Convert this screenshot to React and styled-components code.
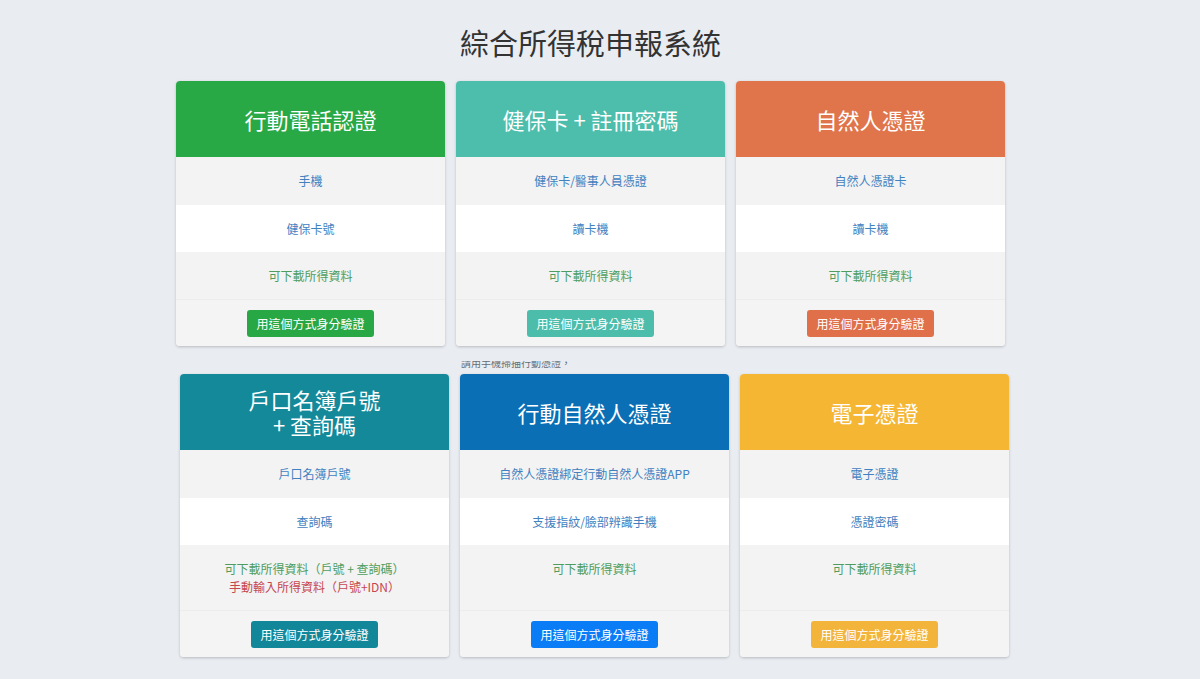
import React from "react";
import styled, { createGlobalStyle } from "styled-components";

const GlobalStyle = createGlobalStyle`
  html, body {
    margin: 0;
    padding: 0;
    background: #e9edf2;
    font-family: "Noto Sans CJK TC", "Liberation Sans", sans-serif;
  }
`;

const Page = styled.div`
  width: 829px;
  margin-left: 176px;
  padding-top: 22px;
  padding-bottom: 22px;
`;

const Title = styled.h1`
  margin: 0 0 19px;
  font-size: 29px;
  line-height: 40px;
  font-weight: 400;
  color: #333;
  text-align: center;
`;

const Row = styled.div`
  display: grid;
  grid-template-columns: repeat(3, 269px);
  column-gap: 11px;
  margin-left: ${(p) => p.$shift || 0}px;
  margin-bottom: 28px;
`;

const Card = styled.div`
  position: relative;
  display: flex;
  flex-direction: column;
  background: #fff;
  border-radius: 4px;
  box-shadow: 0 1px 3px rgba(0, 0, 0, 0.22);
`;

const Header = styled.div`
  display: flex;
  align-items: center;
  justify-content: center;
  min-height: 76px;
  padding: 0 12px;
  box-sizing: border-box;
  background: ${(p) => p.$bg};
  color: #fff;
  font-size: 22px;
  line-height: 25px;
  text-align: center;
  border-radius: 4px 4px 0 0;
`;

const Item = styled.div`
  padding: ${(p) => (p.$first ? "15px" : "15px 8px 14px")};
  padding-left: 8px;
  padding-right: 8px;
  font-size: 12px;
  line-height: 18px;
  text-align: center;
  color: #4281c0;
  background: ${(p) => (p.$light ? "#ffffff" : "#f3f3f3")};
  flex: ${(p) => (p.$grow ? 1 : "none")};
`;

const Note = styled.div`
  color: ${(p) => (p.$warn ? "#c6464f" : "#4d9d60")};
`;

const Footer = styled.div`
  display: flex;
  justify-content: center;
  padding: 10px 0 9px;
  background: #f4f4f4;
  border-top: 1px solid #ececec;
  border-radius: 0 0 4px 4px;
`;

const Button = styled.button`
  height: 27px;
  padding: 0 9px;
  border: none;
  border-radius: 3px;
  background: ${(p) => p.$bg};
  color: #fff;
  font-family: inherit;
  font-size: 12px;
  line-height: 27px;
  cursor: pointer;
`;

const Caption = styled.div`
  position: absolute;
  left: 1px;
  top: -13px;
  height: 9px;
  overflow: hidden;
  display: flex;
  align-items: flex-end;
  font-size: 10px;
  line-height: 14px;
  color: #666c74;
  white-space: nowrap;
`;

const cardsTop = [
  {
    title: "行動電話認證",
    head: "#29a846",
    btn: "#28a745",
    items: ["手機", "健保卡號"],
  },
  {
    title: "健保卡 + 註冊密碼",
    head: "#4dbdac",
    btn: "#4cbcab",
    items: ["健保卡/醫事人員憑證", "讀卡機"],
  },
  {
    title: "自然人憑證",
    head: "#e0744a",
    btn: "#e0704a",
    items: ["自然人憑證卡", "讀卡機"],
  },
];

const cardsBottom = [
  {
    title: ["戶口名簿戶號", "+ 查詢碼"],
    head: "#13899a",
    btn: "#13879a",
    items: ["戶口名簿戶號", "查詢碼"],
    notes: [
      { text: "可下載所得資料（戶號 + 查詢碼）" },
      { text: "手動輸入所得資料（戶號+IDN）", warn: true },
    ],
  },
  {
    title: "行動自然人憑證",
    head: "#0a6fb5",
    btn: "#0a7cf6",
    items: ["自然人憑證綁定行動自然人憑證APP", "支援指紋/臉部辨識手機"],
    caption: "請用手機掃描行動憑證，",
  },
  {
    title: "電子憑證",
    head: "#f5b634",
    btn: "#f2b43a",
    items: ["電子憑證", "憑證密碼"],
  },
];

function MethodCard({ card }) {
  const notes = card.notes || [{ text: "可下載所得資料" }];
  const title = Array.isArray(card.title) ? card.title : [card.title];
  return (
    <Card>
      {card.caption && <Caption>{card.caption}</Caption>}
      <Header $bg={card.head}>
        <div>
          {title.map((t) => (
            <div key={t}>{t}</div>
          ))}
        </div>
      </Header>
      <Item $first>{card.items[0]}</Item>
      <Item $light>{card.items[1]}</Item>
      <Item $grow>
        {notes.map((n) => (
          <Note key={n.text} $warn={n.warn}>
            {n.text}
          </Note>
        ))}
      </Item>
      <Footer>
        <Button type="button" $bg={card.btn}>
          用這個方式身分驗證
        </Button>
      </Footer>
    </Card>
  );
}

export default function App() {
  return (
    <>
      <GlobalStyle />
      <Page>
        <Title>綜合所得稅申報系統</Title>
        <Row>
          {cardsTop.map((c) => (
            <MethodCard key={c.title} card={c} />
          ))}
        </Row>
        <Row $shift={4}>
          {cardsBottom.map((c) => (
            <MethodCard key={c.items[0]} card={c} />
          ))}
        </Row>
      </Page>
    </>
  );
}
